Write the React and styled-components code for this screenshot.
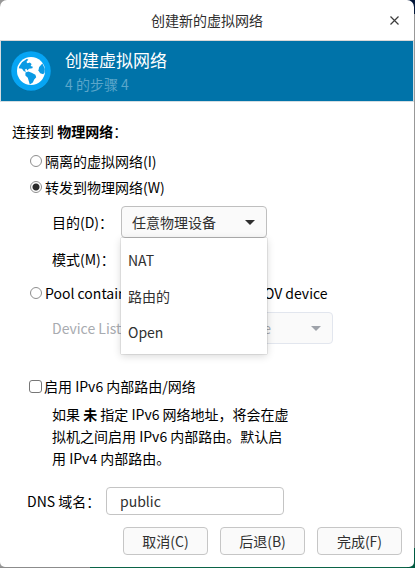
import React, { useState } from "react";
import styled, { createGlobalStyle } from "styled-components";

const GlobalStyle = createGlobalStyle`
  *, *::before, *::after { box-sizing: border-box; }
  body {
    margin: 0;
    font-family: "Noto Sans CJK SC", sans-serif;
    font-size: 14px;
    line-height: 22px;
    color: #000;
    background: #fff;
  }
  button, input, select { font: inherit; margin: 0; }
`;

const Desktop = styled.div`
  display: flex;
  min-height: 100vh;
  padding: 0 1px 1px 0;
  background:
    linear-gradient(#04173a, #04173a) right top / 8px 14px no-repeat,
    linear-gradient(#005a41, #005a41) right bottom / 8px 20px no-repeat,
    linear-gradient(90deg, #8c8c8c 90px, #0b6447 90px) left bottom / 100% 1px no-repeat,
    #989898;
`;

const Dialog = styled.section`
  flex: 1;
  min-width: 0;
  display: flex;
  flex-direction: column;
  background: #fff;
  border-radius: 7px 7px 5px 5px;
`;

const TitleBar = styled.header`
  display: grid;
  grid-template-columns: 40px 1fr 40px;
  align-items: center;
  height: 41px;
  border-bottom: 1px solid #d8d8d8;
  color: #2e2e2e;
`;

const Title = styled.h1`
  grid-column: 2;
  margin: 0;
  font-size: 14px;
  font-weight: 400;
  text-align: center;
`;

const CloseButton = styled.button`
  display: flex;
  align-items: center;
  justify-content: center;
  width: 40px;
  height: 40px;
  padding: 0;
  border: 0;
  background: none;
  color: #3c3c3c;
`;

const Banner = styled.div`
  display: flex;
  align-items: center;
  gap: 14px;
  height: 61px;
  padding-left: 10px;
  border: solid #d4dde2;
  border-width: 0 1px 1px;
  background: #0073a9;
`;

const BannerTitle = styled.h2`
  margin: 0;
  font-size: 17px;
  font-weight: 400;
  line-height: 26px;
  color: #fff;
`;

const BannerStep = styled.p`
  margin: 0;
  color: #5ba6ca;
`;

const Body = styled.form`
  flex: 1;
  display: flex;
  flex-direction: column;
  padding: 18px 12px 12px;
`;

const Heading = styled.p`
  margin: 0 0 8px;
`;

const Options = styled.div`
  display: flex;
  flex-direction: column;
  gap: 4px;
  padding-left: 18px;
`;

const Choice = styled.label`
  display: flex;
  align-items: center;
  gap: ${(p) => p.$gap || "3px"};
`;

const Radio = styled.input.attrs({ type: "radio" })`
  appearance: none;
  flex: none;
  width: 12px;
  height: 12px;
  border: 1px solid #8e8e8e;
  border-radius: 50%;
  background: #fff;
  &:checked {
    background: radial-gradient(circle, #2b2b2b 3px, #fff 4px);
  }
`;

const Checkbox = styled.input.attrs({ type: "checkbox" })`
  appearance: none;
  flex: none;
  width: 13px;
  height: 13px;
  margin-left: -1px;
  border: 1px solid #777;
  border-radius: 3px;
  background: #fff;
  &:checked { background: #0073a9; }
`;

const Fields = styled.div`
  display: grid;
  grid-template-columns: ${(p) => p.$label} ${(p) => p.$control};
  align-items: center;
  row-gap: 5px;
  margin: 4px 0 3px;
  padding-left: 22px;
  color: ${(p) => (p.$muted ? "#a8abb0" : "#000")};
`;

const SelectBox = styled.div`
  position: relative;
  display: flex;
  align-items: center;
  svg {
    position: absolute;
    right: 12px;
    pointer-events: none;
  }
`;

const Select = styled.select`
  appearance: none;
  width: 100%;
  height: 32px;
  padding: 0 30px 0 10px;
  border: 1px solid #bfbfbf;
  border-radius: 4px;
  background: #fafafa;
  color: #303030;
  &:disabled {
    border-color: #e2e6ee;
    color: #a8abb0;
    opacity: 1;
  }
`;

const Menu = styled.div`
  position: absolute;
  z-index: 1;
  top: -5px;
  left: 0;
  right: 0;
  display: flex;
  flex-direction: column;
  padding: 4px 0;
  background: #fff;
  box-shadow: 0 0 1px rgba(0, 0, 0, 0.45), 0 2px 8px rgba(0, 0, 0, 0.16);
`;

const MenuItem = styled.button`
  height: 36px;
  padding: 0 7px;
  border: 0;
  background: none;
  color: #303030;
  text-align: left;
  &:hover { background: #eef3f7; }
`;

const Ipv6 = styled.div`
  padding: 28px 18px 0;
`;

const Note = styled.p`
  max-width: 240px;
  margin: 6px 0 18px 22px;
`;

const DomainRow = styled.div`
  display: flex;
  align-items: center;
  padding-left: 15px;
`;

const DomainLabel = styled.label`
  width: 79px;
`;

const TextInput = styled.input`
  width: 178px;
  height: 28px;
  padding: 0 13px;
  border: 1px solid #c4c4c4;
  border-radius: 4px;
  background: #fff;
  color: #303030;
`;

const Actions = styled.footer`
  display: flex;
  justify-content: flex-end;
  gap: 12px;
  margin-top: auto;
  padding-top: 12px;
`;

const ActionButton = styled.button`
  width: 85px;
  height: 28px;
  padding: 0;
  border: 1px solid #c6c6c6;
  border-radius: 4px;
  background: #fafafa;
  color: #303030;
`;

const Caret = ({ color = "#2e2e2e" }) => (
  <svg width="10" height="5" viewBox="0 0 10 5" aria-hidden="true">
    <path d="M0 0h10L5 5z" fill={color} />
  </svg>
);

const Globe = () => (
  <svg width="40" height="42" viewBox="0 0 40 42" aria-hidden="true">
    <circle cx="20" cy="21.6" r="19.6" fill="#00608f" opacity=".6" />
    <circle cx="20" cy="21" r="19.8" fill="#06a5f4" />
    <circle cx="20" cy="21" r="14" fill="#fff" />
    <path
      fill="#0a9ae4"
      d="M8.2 16.4 11 12.2l4.6-3.2 1.8.5-2 2.5 1.2 1.3 2.2-.8 1.8 1.5-1 2 2.2.8-.4 1.4-3.4.6-1.6 1.6-1-1.6-1.6 1 1.4 2-2.4-.6-1.8-2.4-3.2-.6z"
    />
    <path fill="#0a9ae4" d="m14.4 22.6 3-1 3.2 1.2 3.8 2 .8 2.4-2 2.4-1.4 3-3 1.8-1.2-3.8-.8-2.8-2.4-2.2z" />
    <path fill="#0a9ae4" d="m31.4 13.6-3.2 3.4-.8 3.4 1.8 2.8 3 1 1.4-1.6.2-3.8z" />
  </svg>
);

export default function App() {
  const [forward, setForward] = useState("routed");
  const [domain, setDomain] = useState("public");

  const radio = (value) => ({
    name: "forward",
    value,
    checked: forward === value,
    onChange: () => setForward(value),
  });

  return (
    <>
      <GlobalStyle />
      <Desktop>
        <Dialog>
          <TitleBar>
            <Title>创建新的虚拟网络</Title>
            <CloseButton type="button" aria-label="关闭">
              <svg width="9" height="9" viewBox="0 0 9 9" aria-hidden="true">
                <path d="M.5.5l8 8M8.5.5l-8 8" stroke="currentColor" strokeWidth="1.2" />
              </svg>
            </CloseButton>
          </TitleBar>
          <Banner>
            <Globe />
            <div>
              <BannerTitle>创建虚拟网络</BannerTitle>
              <BannerStep>4 的步骤 4</BannerStep>
            </div>
          </Banner>
          <Body onSubmit={(e) => e.preventDefault()}>
            <Heading>
              连接到 <b>物理网络</b>：
            </Heading>
            <Options>
              <Choice>
                <Radio {...radio("isolated")} />
                隔离的虚拟网络(I)
              </Choice>
              <Choice>
                <Radio {...radio("routed")} />
                转发到物理网络(W)
              </Choice>
              <Fields $label="69px" $control="146px">
                <label htmlFor="target">目的(D)：</label>
                <SelectBox>
                  <Select id="target">
                    <option>任意物理设备</option>
                  </Select>
                  <Caret />
                </SelectBox>
                <label htmlFor="mode">模式(M)：</label>
                <SelectBox>
                  <Select id="mode">
                    <option>NAT</option>
                    <option>路由的</option>
                    <option>Open</option>
                  </Select>
                  <Menu role="listbox" aria-label="模式">
                    {["NAT", "路由的", "Open"].map((name) => (
                      <MenuItem key={name} type="button" role="option" aria-selected={name === "NAT"}>
                        {name}
                      </MenuItem>
                    ))}
                  </Menu>
                </SelectBox>
              </Fields>
              <Choice>
                <Radio {...radio("pool")} />
                Pool containing all VFs of one SR-IOV device
              </Choice>
              <Fields $label="82px" $control="199px" $muted>
                <label htmlFor="device">Device List:</label>
                <SelectBox>
                  <Select id="device" disabled>
                    <option>No available device</option>
                  </Select>
                  <Caret color="#9fa3aa" />
                </SelectBox>
              </Fields>
            </Options>
            <Ipv6>
              <Choice $gap="2px">
                <Checkbox />
                启用 IPv6 内部路由/网络
              </Choice>
              <Note>
                如果 <b>未</b> 指定 IPv6 网络地址，将会在虚拟机之间启用 IPv6 内部路由。默认启用 IPv4 内部路由。
              </Note>
            </Ipv6>
            <DomainRow>
              <DomainLabel htmlFor="domain">DNS 域名：</DomainLabel>
              <TextInput id="domain" value={domain} onChange={(e) => setDomain(e.target.value)} />
            </DomainRow>
            <Actions>
              <ActionButton type="button">取消(C)</ActionButton>
              <ActionButton type="button">后退(B)</ActionButton>
              <ActionButton type="submit">完成(F)</ActionButton>
            </Actions>
          </Body>
        </Dialog>
      </Desktop>
    </>
  );
}
